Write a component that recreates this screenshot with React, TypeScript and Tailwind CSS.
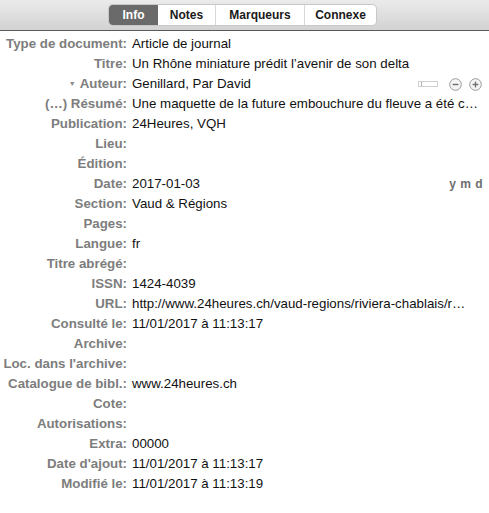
const rows: { label: string; value?: string; kind?: string }[] = [
  { label: "Type de document:", value: "Article de journal" },
  { label: "Titre:", value: "Un Rhône miniature prédit l’avenir de son delta" },
  { label: "Auteur:", value: "Genillard, Par David", kind: "author" },
  { label: "(…) Résumé:", value: "Une maquette de la future embouchure du fleuve a été c…" },
  { label: "Publication:", value: "24Heures, VQH" },
  { label: "Lieu:" },
  { label: "Édition:" },
  { label: "Date:", value: "2017-01-03", kind: "date" },
  { label: "Section:", value: "Vaud & Régions" },
  { label: "Pages:" },
  { label: "Langue:", value: "fr" },
  { label: "Titre abrégé:" },
  { label: "ISSN:", value: "1424-4039" },
  { label: "URL:", value: "http://www.24heures.ch/vaud-regions/riviera-chablais/r…" },
  { label: "Consulté le:", value: "11/01/2017 à 11:13:17" },
  { label: "Archive:" },
  { label: "Loc. dans l'archive:" },
  { label: "Catalogue de bibl.:", value: "www.24heures.ch" },
  { label: "Cote:" },
  { label: "Autorisations:" },
  { label: "Extra:", value: "00000" },
  { label: "Date d'ajout:", value: "11/01/2017 à 11:13:17" },
  { label: "Modifié le:", value: "11/01/2017 à 11:13:19" },
];

const tabs = ["Info", "Notes", "Marqueurs", "Connexe"];
const tabWidths = ["w-[49px]", "w-[57px]", "w-[89px]", "w-[72px]"];

function RoundBtn({ sign }: { sign: "-" | "+" }) {
  return (
    <svg width="13" height="13" viewBox="0 0 13 13">
      <circle cx="6.5" cy="6.5" r="5.8" fill="#f4f4f4" stroke="#9a9a9a" strokeWidth="1" />
      <line x1="3.6" y1="6.5" x2="9.4" y2="6.5" stroke="#6e6e6e" strokeWidth="1.4" />
      {sign === "+" && <line x1="6.5" y1="3.6" x2="6.5" y2="9.4" stroke="#6e6e6e" strokeWidth="1.4" />}
    </svg>
  );
}

export default function App() {
  return (
    <div className="w-[489px] h-[513px] bg-white overflow-hidden font-['Liberation_Sans',Arial,sans-serif]">
      {/* toolbar with tabs */}
      <div className="h-[31px] bg-gradient-to-b from-[#ebebeb] to-[#d2d2d2] border-b border-[#5a5a5a] flex items-center pl-[109px]">
        <div className="flex h-[20px] rounded-[4px] bg-white shadow-[0_0_0_1px_#c8c8c8] overflow-hidden text-[12px] font-bold">
          {tabs.map((t, i) => (
            <div
              key={t}
              className={`${tabWidths[i]} flex items-center justify-center ${
                i === 0 ? "bg-[#6a6a6a] text-white" : "text-[#1a1a1a]"
              } ${i > 1 ? "border-l border-[#d8d8d8]" : ""}`}
            >
              {t}
            </div>
          ))}
        </div>
      </div>

      {/* fields */}
      <div className="pt-[3px]">
        {rows.map((r) => (
          <div key={r.label} className="flex items-center h-[20px]">
            <div className="w-[127px] shrink-0 text-right font-bold text-[13.3px] text-[#7d7d7d] flex items-center justify-end">
              {r.kind === "author" && <span className="text-[7px] mr-[4px] text-[#8a8a8a]">▼</span>}
              {r.label}
            </div>
            <div className="flex-1 min-w-0 pl-[5px] pr-[7px] flex items-center text-[13.3px] text-[#111]">
              <span className="whitespace-nowrap flex-1 min-w-0">{r.value}</span>
              {r.kind === "author" && (
                <div className="flex items-center gap-[7px]">
                  <div className="w-[20px] h-[6px] border border-[#d0d0d0] bg-white mr-[4px] flex items-center">
                    <div className="w-px h-[4px] bg-[#b0b0b0] ml-[2px]" />
                  </div>
                  <RoundBtn sign="-" />
                  <RoundBtn sign="+" />
                </div>
              )}
              {r.kind === "date" && (
                <span className="font-bold text-[#6e6e6e] text-[12px] mr-[-1px] tracking-[0.5px]">y m d</span>
              )}
            </div>
          </div>
        ))}
      </div>
    </div>
  );
}
